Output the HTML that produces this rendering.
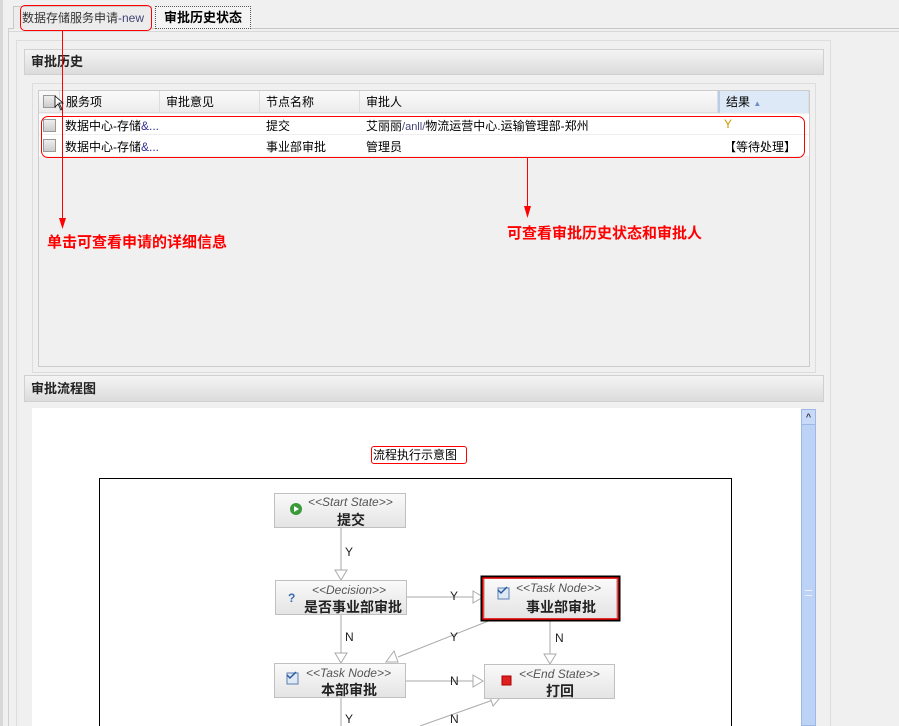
<!DOCTYPE html>
<html><head><meta charset="utf-8"><style>
*{margin:0;padding:0;box-sizing:border-box}
body{width:899px;height:726px;background:#f0f0f0;position:relative;overflow:hidden;font-family:"Liberation Sans","Noto Sans CJK SC",sans-serif;font-size:12px;color:#000}
.a{position:absolute}
.hdr{background:linear-gradient(#f4f4f4,#dcdcdc);border:1px solid #d0d0d0;font-weight:bold;font-size:13px;color:#222;padding-left:6px}
.cb{position:absolute;width:13px;height:13px;border:1px solid #999;background:linear-gradient(#eee,#ccc)}
.col{position:absolute;top:0;height:22px;line-height:22px;padding-left:6px;border-right:1px solid #ddd}
.red{color:#f00;font-weight:bold;font-size:15px}
</style></head><body>
<div class="a" style="left:0;top:0;width:3px;height:726px;background:#d8d8d8"></div>
<div class="a" style="top:28px;left:8px;width:891px;height:1px;background:#c8c8c8"></div>
<div class="a" style="left:8px;top:31px;width:891px;height:1px;background:#d8d8d8"></div>
<div class="a" style="left:8px;top:28px;width:1px;height:698px;background:#d0d0d0"></div>
<div class="a" style="left:13px;top:6px;width:139px;height:23px;background:#ececec;border:1px solid #c8c8c8;border-bottom:none;line-height:22px;padding-left:8px;font-size:12px;color:#333">数据存储服务申请<span style="color:#447">-new</span></div>
<div class="a" style="left:20px;top:5px;width:132px;height:26px;border:1px solid #f00;border-radius:5px"></div>
<div class="a" style="left:155px;top:6px;width:96px;height:23px;background:#f4f4f4;border:1px dotted #555;line-height:21px;text-align:center;font-weight:bold;font-size:13px">审批历史状态</div>
<div class="a" style="left:16px;top:40px;width:815px;height:686px;border:1px solid #ddd;border-bottom:none"></div>
<div class="a hdr" style="left:24px;top:49px;width:800px;height:26px;line-height:24px">审批历史</div>
<div class="a" style="left:32px;top:83px;width:784px;height:290px;border:1px solid #ddd"></div>
<div class="a" style="left:38px;top:90px;width:772px;height:277px;border:1px solid #ccc"></div>
<div class="a" style="left:39px;top:91px;width:770px;height:22px;background:linear-gradient(#fafafa,#ececec);border-bottom:1px solid #ddd">
<div class="cb" style="left:4px;top:4px"></div>
<div class="col" style="left:20px;width:101px;border-left:1px solid #ddd">服务项</div>
<div class="col" style="left:121px;width:100px">审批意见</div>
<div class="col" style="left:221px;width:100px">节点名称</div>
<div class="col" style="left:321px;width:358px">审批人</div>
<div class="col" style="left:679px;width:91px;background:#dde9f7;border-left:2px solid #b8cde8">结果 <span style="color:#6b8fc0;font-size:8px">▲</span></div>
</div>
<div class="a" style="left:39px;top:114px;width:770px;height:21px;background:#fff;border-bottom:1px solid #eee"></div>
<div class="a" style="left:39px;top:135px;width:770px;height:21px;background:#fff"></div>
<div class="cb" style="left:43px;top:119px"></div>
<div class="cb" style="left:43px;top:139px"></div>
<div class="a" style="left:65px;top:117px">数据中心-存储<span style="color:#339">&amp;...</span></div>
<div class="a" style="left:65px;top:138px">数据中心-存储<span style="color:#339">&amp;...</span></div>
<div class="a" style="left:266px;top:117px">提交</div>
<div class="a" style="left:266px;top:138px">事业部审批</div>
<div class="a" style="left:366px;top:117px">艾丽丽<span style="color:#447;font-size:11px">/anll/</span>物流运营中心.运输管理部-郑州</div>
<div class="a" style="left:366px;top:138px">管理员</div>
<div class="a" style="left:724px;top:117px;color:#c90">Y</div>
<div class="a" style="left:724px;top:138px">【等待处理】</div>
<div class="a" style="left:41px;top:116px;width:764px;height:42px;border:1px solid #f00;border-radius:7px"></div>
<svg class="a" style="left:0;top:0" width="899" height="726">
<line x1="62.5" y1="30" x2="62.5" y2="222" stroke="#f00"/><polygon points="59,218 66,218 62.5,229" fill="#f00"/>
<line x1="527.5" y1="157" x2="527.5" y2="210" stroke="#f00"/><polygon points="524,206 531,206 527.5,218" fill="#f00"/>
<polyline points="55,96 55,107 58,104 61,110 62,109 59,103 63,103 55,96" fill="#fff" stroke="#000" stroke-width="0.8"/>
</svg>
<div class="a red" style="left:47px;top:231px">单击可查看申请的详细信息</div>
<div class="a red" style="left:507px;top:222px">可查看审批历史状态和审批人</div>
<div class="a hdr" style="left:24px;top:375px;width:800px;height:27px;line-height:26px">审批流程图</div>
<div class="a" style="left:32px;top:408px;width:769px;height:318px;background:#fff"></div>
<div class="a" style="left:801px;top:409px;width:15px;height:317px;background:#bcd3f6;border:1px solid #9db7e6"></div>
<div class="a" style="left:801px;top:409px;width:15px;height:16px;background:#c8daf8;border:1px solid #9db7e6;text-align:center;font-size:9px;line-height:14px;color:#334;font-weight:bold">^</div>
<div class="a" style="left:805px;top:590px;width:7px;height:6px;border-top:1px solid #eef;border-bottom:1px solid #eef"></div>
<div class="a" style="left:371px;top:446px;width:96px;height:18px;border:1px solid #f00;border-radius:3px;line-height:16px;padding-left:1px;font-size:12px">流程执行示意图</div>
<svg class="a" style="left:0;top:0" width="899" height="726" font-family="Liberation Sans,Noto Sans CJK SC,sans-serif">
<defs><linearGradient id="g" x1="0" y1="0" x2="0" y2="1"><stop offset="0" stop-color="#fafafa"/><stop offset="1" stop-color="#e4e4e4"/></linearGradient></defs>
<rect x="99.5" y="478.5" width="632" height="260" fill="none" stroke="#000"/>
<g stroke="#aaa" fill="none">
<line x1="341" y1="528" x2="341" y2="570"/><polygon points="335,570 347,570 341,580" fill="#fff"/>
<line x1="406" y1="597" x2="473" y2="597"/><polygon points="473,591 483,597 473,603" fill="#fff"/>
<line x1="341" y1="615" x2="341" y2="653"/><polygon points="335,653 347,653 341,663" fill="#fff"/>
<line x1="496" y1="618" x2="398" y2="657"/><polygon points="394,651 398,662 386,662" fill="#fff"/>
<line x1="550" y1="620" x2="550" y2="654"/><polygon points="544,654 556,654 550,664" fill="#fff"/>
<line x1="405" y1="681" x2="473" y2="681"/><polygon points="473,675 483,681 473,687" fill="#fff"/>
<line x1="341" y1="698" x2="341" y2="726"/>
<line x1="420" y1="726" x2="493" y2="700"/><polygon points="489,694 500,698 493,706" fill="#fff"/>
</g>
<g font-size="12" fill="#222"><text x="345" y="556">Y</text><text x="450" y="600">Y</text><text x="345" y="641">N</text><text x="450" y="641">Y</text><text x="555" y="642">N</text><text x="450" y="685">N</text><text x="345" y="723">Y</text><text x="450" y="723">N</text></g>
<g stroke="#c0c0c0" fill="url(#g)">
<rect x="274.5" y="493.5" width="131" height="34"/>
<rect x="275.5" y="580.5" width="131" height="34"/>
<rect x="484.5" y="578.5" width="132" height="40"/>
<rect x="274.5" y="663.5" width="131" height="34"/>
<rect x="484.5" y="664.5" width="130" height="34"/>
</g>
<rect x="481.5" y="576.5" width="138" height="44" fill="none" stroke="#000" stroke-width="2"/>
<rect x="483" y="578" width="135" height="41" fill="none" stroke="#e00" stroke-width="1.5"/>
<g font-size="12" font-style="italic" fill="#555"><text x="308" y="506">&lt;&lt;Start State&gt;&gt;</text><text x="312" y="594">&lt;&lt;Decision&gt;&gt;</text><text x="516" y="592">&lt;&lt;Task Node&gt;&gt;</text><text x="306" y="677">&lt;&lt;Task Node&gt;&gt;</text><text x="519" y="678">&lt;&lt;End State&gt;&gt;</text></g>
<g font-size="14" font-weight="bold" fill="#222"><text x="337" y="525">提交</text><text x="304" y="612">是否事业部审批</text><text x="526" y="612">事业部审批</text><text x="321" y="695">本部审批</text><text x="546" y="696">打回</text></g>
<circle cx="296" cy="509" r="6" fill="#3a9a3a"/><polygon points="294,506 294,512 299,509" fill="#fff"/>
<text x="288" y="602" font-size="12" fill="#3a6ab0" font-weight="bold">?</text>
<rect x="498" y="588" width="11" height="11" fill="#dfe9f5" stroke="#5a80b0"/><path d="M498 590 l3 3 l6 -6" stroke="#2a5aa0" fill="none" stroke-width="1.5"/>
<rect x="287" y="673" width="11" height="11" fill="#dfe9f5" stroke="#5a80b0"/><path d="M287 675 l3 3 l6 -6" stroke="#2a5aa0" fill="none" stroke-width="1.5"/>
<rect x="502" y="676" width="9" height="9" fill="#e02020" stroke="#a00"/>
</svg>
</body></html>
